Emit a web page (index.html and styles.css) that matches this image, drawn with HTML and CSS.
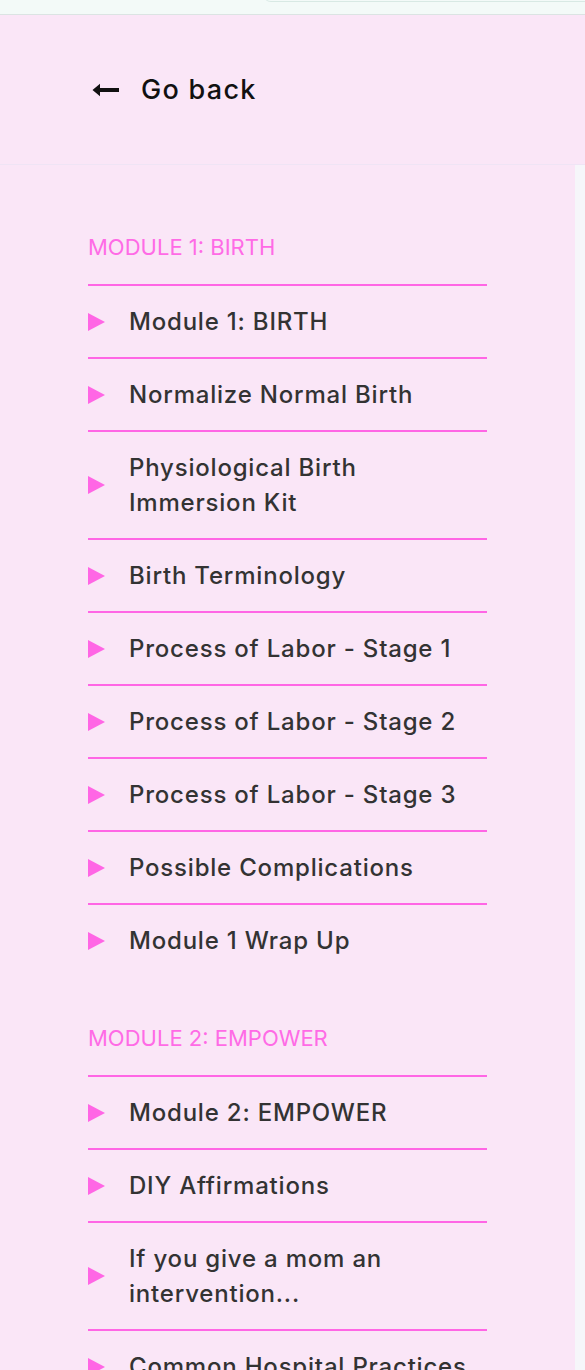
FILE: index.html
```html
<!DOCTYPE html>
<html lang="en">
<head>
<meta charset="utf-8">
<title>Course navigation</title>
<link rel="stylesheet" href="styles.css">
</head>
<body>
<div class="topbar"><div class="topbar-tab"></div></div>
<header class="header">
  <a class="back" href="#">
    <svg class="back-icon" width="28" height="14" viewBox="0 0 28 14" aria-hidden="true">
      <path d="M0.5 7 L8 0.8 L8 5 L27 5 L27 9 L8 9 L8 13.2 Z" fill="#111"/>
    </svg>
    <span>Go back</span>
  </a>
</header>
<div class="main">
  <nav class="sidebar">
    <section class="module">
      <h2 class="module-title">MODULE 1: BIRTH</h2>
      <ul class="lessons">
        <li class="lesson"><span class="tri"></span><span class="lesson-name">Module 1: BIRTH</span></li>
        <li class="lesson"><span class="tri"></span><span class="lesson-name">Normalize Normal Birth</span></li>
        <li class="lesson"><span class="tri"></span><span class="lesson-name">Physiological Birth<br>Immersion Kit</span></li>
        <li class="lesson"><span class="tri"></span><span class="lesson-name">Birth Terminology</span></li>
        <li class="lesson"><span class="tri"></span><span class="lesson-name">Process of Labor - Stage 1</span></li>
        <li class="lesson"><span class="tri"></span><span class="lesson-name">Process of Labor - Stage 2</span></li>
        <li class="lesson"><span class="tri"></span><span class="lesson-name">Process of Labor - Stage 3</span></li>
        <li class="lesson"><span class="tri"></span><span class="lesson-name">Possible Complications</span></li>
        <li class="lesson"><span class="tri"></span><span class="lesson-name">Module 1 Wrap Up</span></li>
      </ul>
    </section>
    <section class="module">
      <h2 class="module-title">MODULE 2: EMPOWER</h2>
      <ul class="lessons">
        <li class="lesson"><span class="tri"></span><span class="lesson-name">Module 2: EMPOWER</span></li>
        <li class="lesson"><span class="tri"></span><span class="lesson-name">DIY Affirmations</span></li>
        <li class="lesson"><span class="tri"></span><span class="lesson-name">If you give a mom an<br>intervention...</span></li>
        <li class="lesson"><span class="tri"></span><span class="lesson-name">Common Hospital Practices</span></li>
      </ul>
    </section>
  </nav>
  <div class="content"></div>
</div>
</body>
</html>
```
FILE: styles.css
```css
* { box-sizing: border-box; }
html, body { margin: 0; padding: 0; }
body {
  font-family: Inter, "Noto Sans", sans-serif;
  background: #f6f6fa;
  height: 1370px;
  overflow: hidden;
}
.topbar {
  height: 15px;
  background: #f3faf8;
  border-bottom: 1px solid #dbe4e3;
  position: relative;
}
.topbar-tab {
  position: absolute;
  left: 263px;
  right: 0;
  top: -10px;
  height: 12px;
  border-radius: 0 0 0 8px;
  border-bottom: 1px solid #d8e9e4;
  background: #f3faf8;
}
.header {
  height: 150px;
  background: #fae6f7;
  border-bottom: 1px solid #efe4f5;
  display: flex;
  align-items: center;
  padding-left: 92px;
}
.back {
  display: flex;
  align-items: center;
  gap: 21px;
  color: #111;
  text-decoration: none;
  font-size: 27px;
  font-weight: 500;
  letter-spacing: 1.3px;
  line-height: 30px;
}
.back-icon { display: block; }
.main {
  display: flex;
  align-items: flex-start;
}
.sidebar {
  width: 575px;
  background: #fae6f7;
  padding: 67px 0 40px 88px;
  min-height: 1210px;
}
.module + .module { margin-top: 47px; }
.module-title {
  margin: 0 0 22px;
  font-size: 22px;
  font-weight: 400;
  line-height: 30px;
  color: #ff6be6;
}
.lessons {
  list-style: none;
  margin: 0;
  padding: 0;
  width: 399px;
  border-top: 2px solid #ff66e5;
}
.lesson {
  display: flex;
  align-items: center;
  gap: 24px;
  padding: 18px 0;
  border-bottom: 2px solid #ff66e5;
  font-size: 24px;
  font-weight: 500;
  letter-spacing: 0.8px;
  line-height: 35px;
  color: #333;
}
.lesson:last-child { border-bottom: none; }
.tri {
  flex: none;
  width: 0;
  height: 0;
  border-top: 9px solid transparent;
  border-bottom: 9px solid transparent;
  border-left: 17px solid #ff66e5;
}
.content { flex: 1; }
```
